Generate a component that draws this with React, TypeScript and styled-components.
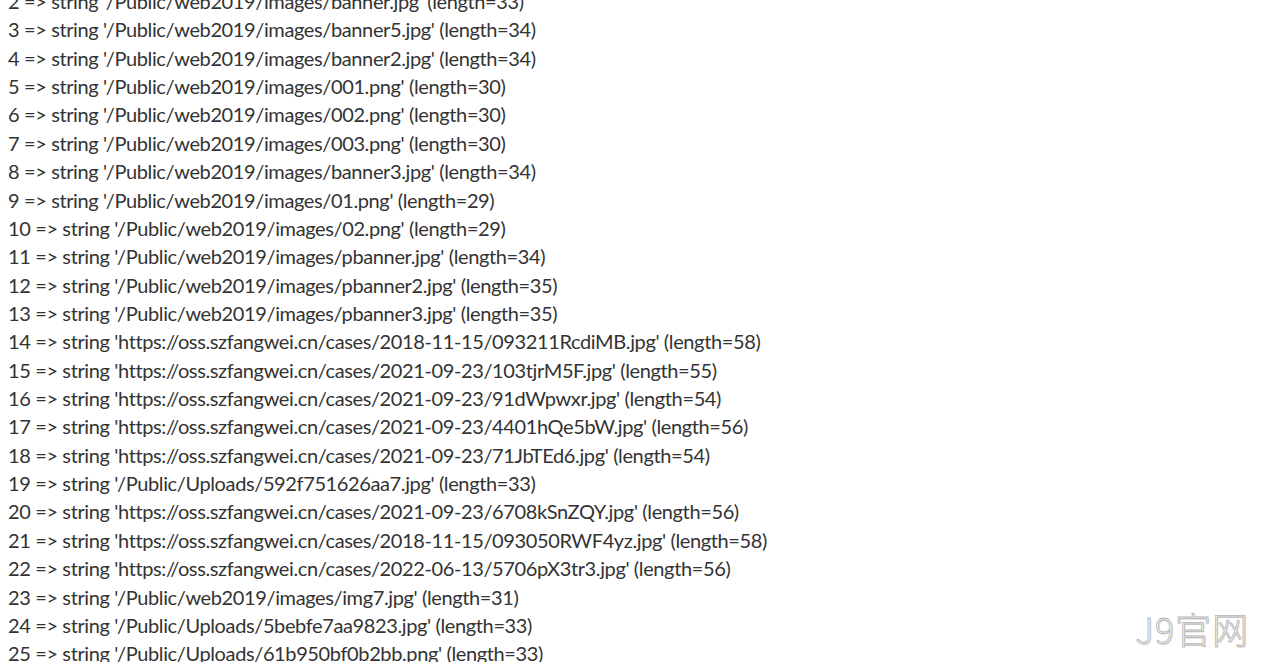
import React from "react";
import styled, { createGlobalStyle } from "styled-components";

const Global = createGlobalStyle`
  html, body { margin: 0; padding: 0; background: #ffffff; overflow: hidden; }
  body { width: 1263px; height: 662px; }
`;

const Page = styled.div`
  position: relative;
  width: 1263px;
  height: 662px;
  overflow: hidden;
  background: #fff;
`;

const List = styled.div`
  display: flex;
  flex-direction: column;
  margin-top: -13px;
  padding-left: 8px;
  font-family: "Lato", "Noto Sans", sans-serif;
  font-size: 20px;
  letter-spacing: -0.38px;
  color: #333;
`;

const Row = styled.div`
  height: 28.36px;
  line-height: 28.36px;
  white-space: nowrap;
`;

const Mark = styled.div`
  position: absolute;
  right: 14px;
  bottom: 8px;
  font-family: "Noto Sans CJK SC", sans-serif;
  font-weight: 300;
  font-size: 36px;
  letter-spacing: 1px;
  color: #f7f7f7;
  -webkit-text-stroke: 0.8px #b5b5b5;
  text-shadow: 1px 1px 1px rgba(0, 0, 0, 0.15);
`;

const pw = "/Public/web2019/images/";
const oss = "https://oss.szfangwei.cn/cases/";
const rows: [number, string][] = [
  [2, pw + "banner.jpg"],
  [3, pw + "banner5.jpg"],
  [4, pw + "banner2.jpg"],
  [5, pw + "001.png"],
  [6, pw + "002.png"],
  [7, pw + "003.png"],
  [8, pw + "banner3.jpg"],
  [9, pw + "01.png"],
  [10, pw + "02.png"],
  [11, pw + "pbanner.jpg"],
  [12, pw + "pbanner2.jpg"],
  [13, pw + "pbanner3.jpg"],
  [14, oss + "2018-11-15/093211RcdiMB.jpg"],
  [15, oss + "2021-09-23/103tjrM5F.jpg"],
  [16, oss + "2021-09-23/91dWpwxr.jpg"],
  [17, oss + "2021-09-23/4401hQe5bW.jpg"],
  [18, oss + "2021-09-23/71JbTEd6.jpg"],
  [19, "/Public/Uploads/592f751626aa7.jpg"],
  [20, oss + "2021-09-23/6708kSnZQY.jpg"],
  [21, oss + "2018-11-15/093050RWF4yz.jpg"],
  [22, oss + "2022-06-13/5706pX3tr3.jpg"],
  [23, pw + "img7.jpg"],
  [24, "/Public/Uploads/5bebfe7aa9823.jpg"],
  [25, "/Public/Uploads/61b950bf0b2bb.png"],
];

export default function App() {
  return (
    <Page>
      <Global />
      <List>
        {rows.map(([i, s]) => (
          <Row key={i}>
            {i} =&gt; string '{s}' (length={s.length})
          </Row>
        ))}
      </List>
      <Mark>J9官网</Mark>
    </Page>
  );
}
